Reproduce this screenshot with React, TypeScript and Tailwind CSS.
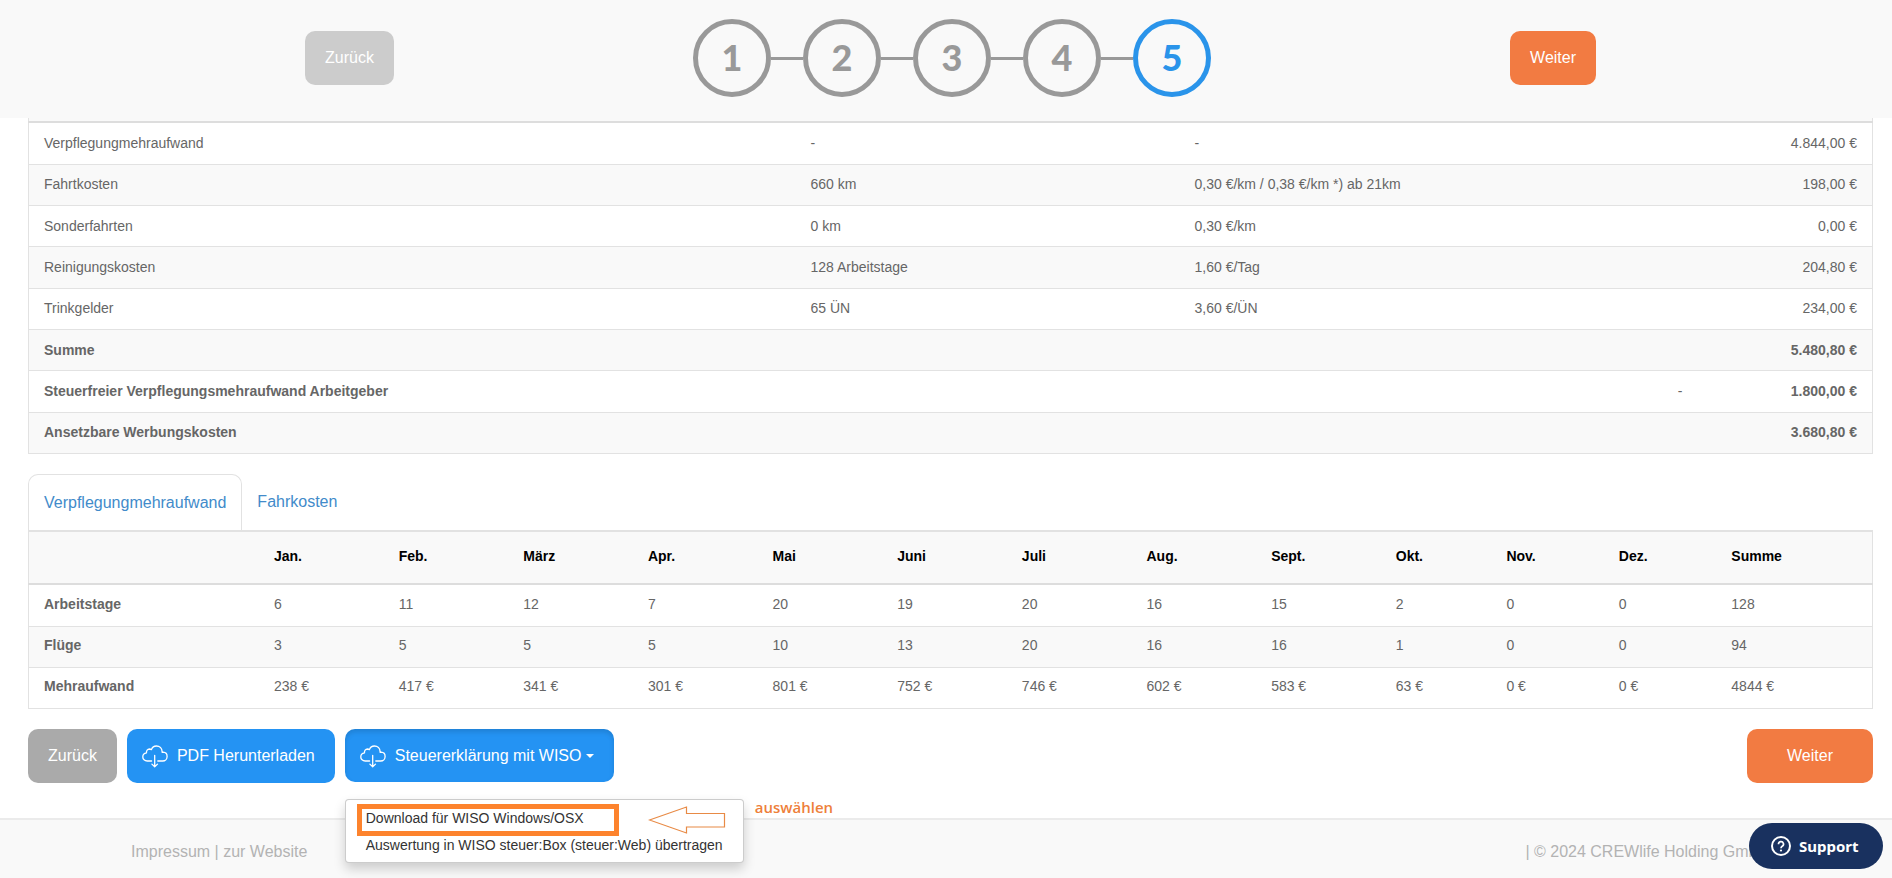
import React from "react";

const steps = ["1", "2", "3", "4", "5"];

const costs: string[][] = [
  ["Verpflegungmehraufwand", "-", "-", "4.844,00 €"],
  ["Fahrtkosten", "660 km", "0,30 €/km / 0,38 €/km *) ab 21km", "198,00 €"],
  ["Sonderfahrten", "0 km", "0,30 €/km", "0,00 €"],
  ["Reinigungskosten", "128 Arbeitstage", "1,60 €/Tag", "204,80 €"],
  ["Trinkgelder", "65 ÜN", "3,60 €/ÜN", "234,00 €"],
];

const totals: string[][] = [
  ["Summe", "", "5.480,80 €"],
  ["Steuerfreier Verpflegungsmehraufwand Arbeitgeber", "-", "1.800,00 €"],
  ["Ansetzbare Werbungskosten", "", "3.680,80 €"],
];

const months = ["Jan.", "Feb.", "März", "Apr.", "Mai", "Juni", "Juli", "Aug.", "Sept.", "Okt.", "Nov.", "Dez.", "Summe"];

const monthly: string[][] = [
  ["Arbeitstage", "6", "11", "12", "7", "20", "19", "20", "16", "15", "2", "0", "0", "128"],
  ["Flüge", "3", "5", "5", "5", "10", "13", "20", "16", "16", "1", "0", "0", "94"],
  ["Mehraufwand", "238 €", "417 €", "341 €", "301 €", "801 €", "752 €", "746 €", "602 €", "583 €", "63 €", "0 €", "0 €", "4844 €"],
];

function CloudDownload() {
  return (
    <svg width="26" height="26" viewBox="0 0 26 26" fill="none" stroke="currentColor" strokeWidth="1.3" strokeLinecap="round" strokeLinejoin="round" aria-hidden="true">
      <path d="M9.600 18H5.200C2.700 18 .8 16.300.8 13.900c0-2.200 1.600-3.700 3.700-4-.3-2.100 1-3.800 3-3.900.7 0 1.300.2 1.900.6C10.200 4.400 12.100 3 14.400 3c3.200 0 5.600 2.400 5.700 5.500v.8c.4-.1.7-.1 1-.1 2.300.1 4 2 4 4.300 0 2.500-1.900 4.500-4.400 4.500H15.800" />
      <path d="M12.700 12.300V23.600M9.900 21.100l2.800 2.700 2.800-2.700" />
    </svg>
  );
}

function Stepper() {
  return (
    <ol className="flex items-center">
      {steps.map((s, i) => (
        <li key={s} className="flex items-center">
          {i > 0 && <span className="h-[3px] w-8 bg-[#999]" />}
          <span
            className={
              i === 4
                ? "flex size-[78px] items-center justify-center rounded-full border-5 border-[#2a94ea] pb-[2px] font-['Lato',sans-serif] text-4xl font-black text-[#2a94ea]"
                : "flex size-[78px] items-center justify-center rounded-full border-5 border-[#999] pb-[2px] font-['Lato',sans-serif] text-4xl font-black text-[#999]"
            }
          >
            {s}
          </span>
        </li>
      ))}
    </ol>
  );
}

export default function App() {
  return (
    <div className="flex min-h-screen flex-col bg-white font-['Liberation_Sans',Arial,sans-serif] text-base text-[#666]">
      <header className="flex h-[118px] items-center justify-between bg-[#f9f9f9] pr-[296px] pb-[2px] pl-[305px]">
        <button className="h-[54px] rounded-[10px] bg-[#ccc] px-5 text-white">Zurück</button>
        <Stepper />
        <button className="h-[54px] rounded-[10px] bg-[#f27b42] px-5 text-white">Weiter</button>
      </header>

      <main className="pr-[19px] pb-[35px] pl-7">
        <div className="h-[3px] border-x border-[#e2e2e2] bg-[#f9f9f9]" />
        <table className="h-[333px] w-full table-fixed border-collapse border border-t-2 border-[#e2e2e2] border-t-[#ddd] text-sm">
          <colgroup>
            <col className="w-[767px]" />
            <col className="w-[384px]" />
            <col />
            <col className="w-[190px]" />
          </colgroup>
          <tbody>
            {costs.map((r) => (
              <tr key={r[0]} className="border-b border-[#e2e2e2] even:bg-[#f9f9f9]">
                <td className="px-[15px] pb-px">{r[0]}</td>
                <td className="px-[15px] pb-px">{r[1]}</td>
                <td className="px-[15px] pb-px">{r[2]}</td>
                <td className="px-[15px] pb-px text-right">{r[3]}</td>
              </tr>
            ))}
            {totals.map((r) => (
              <tr key={r[0]} className="border-b border-[#e2e2e2] even:bg-[#f9f9f9]">
                <th scope="row" colSpan={2} className="px-[15px] pb-px text-left font-bold">{r[0]}</th>
                <td className="pb-px text-right">{r[1]}</td>
                <td className="px-[15px] pb-px text-right font-bold">{r[2]}</td>
              </tr>
            ))}
          </tbody>
        </table>

        <nav className="mt-5 flex h-14 text-[#428bca]">
          <a href="#verpflegung" className="flex items-center rounded-t-[10px] border border-b-0 border-[#e2e2e2] px-[15px]">Verpflegungmehraufwand</a>
          <a href="#fahrkosten" className="flex items-center px-[15px]">Fahrkosten</a>
        </nav>

        <table className="h-[179px] w-full table-fixed border-collapse border border-t-2 border-[#e2e2e2] text-sm">
          <colgroup>
            <col className="w-[12.5%]" />
            {months.map((m, i) => (
              <col key={m} className={i < 9 ? "w-[6.76%]" : i === 9 ? "w-[6%]" : i < 12 ? "w-[6.1%]" : ""} />
            ))}
          </colgroup>
          <thead>
            <tr className="h-[53px] border-b-2 border-[#ddd] bg-[#f9f9f9] text-left text-black">
              <td />
              {months.map((m) => (
                <th key={m} scope="col" className="px-[15px] pb-1 font-bold">{m}</th>
              ))}
            </tr>
          </thead>
          <tbody>
            {monthly.map((r) => (
              <tr key={r[0]} className="border-b border-[#e2e2e2] even:bg-[#f9f9f9]">
                <th scope="row" className="px-[15px] pb-[3px] text-left font-bold">{r[0]}</th>
                {r.slice(1).map((v, i) => (
                  <td key={i} className="px-[15px] pb-[3px]">{v}</td>
                ))}
              </tr>
            ))}
          </tbody>
        </table>

        <div className="mt-5 flex h-[54px] items-start gap-[10px] text-white">
          <button className="h-[54px] rounded-[10px] bg-[#aaa] px-5">Zurück</button>
          <button className="flex h-[54px] items-center gap-[9px] rounded-[10px] bg-[#2493f3] pr-5 pl-[15px]">
            <CloudDownload />
            PDF Herunterladen
          </button>
          <div className="relative">
            <button aria-expanded="true" className="flex h-[53px] items-center gap-[9px] rounded-[10px] bg-[#2493f3] pr-5 pl-[15px] shadow-[inset_0_3px_5px_rgba(0,0,0,0.125)]">
              <CloudDownload />
              <span className="flex items-center gap-[5px]">
                Steuererklärung mit WISO
                <span className="border-x-4 border-t-4 border-x-transparent border-t-white" />
              </span>
            </button>
            <div className="absolute top-[70px] left-0 z-10 w-[399px] rounded border border-black/20 bg-white px-[11px] pt-1 pb-2 text-sm text-[#333] shadow-[0_6px_12px_rgba(0,0,0,0.18)]">
              <div className="flex items-center gap-[29px]">
                <a href="#wiso-download" className="block h-8 w-[262px] border-5 border-[#fd832d] pl-1 leading-[18px]">Download für WISO Windows/OSX</a>
                <svg width="78" height="28" viewBox="0 0 78 28" fill="none" stroke="#e88a45" strokeWidth="1.200" aria-hidden="true">
                  <path d="M1.500 14 38.500 1v6.500h38v13.500h-38V27Z" />
                </svg>
              </div>
              <a href="#wiso-box" className="block pl-[9px] leading-[18px]">Auswertung in WISO steuer:Box (steuer:Web) übertragen</a>
            </div>
            <span className="absolute top-[67px] left-[410px] font-['Open_Sans',sans-serif] text-[15px] leading-[22px] font-semibold text-[#ee7f3a]">auswählen</span>
          </div>
          <button className="ml-auto h-[54px] w-[126px] rounded-[10px] bg-[#f27b42]">Weiter</button>
        </div>
      </main>

      <footer className="flex flex-1 items-center justify-between border-t-2 border-[#ebebeb] bg-[#f9f9f9] pt-[6px] pr-[123px] pl-[131px] text-[#b3b3b3]">
        <div>
          <a href="#impressum">Impressum</a> | <a href="#website">zur Website</a>
        </div>
        <div>| © 2024 CREWlife Holding GmbH</div>
      </footer>

      <button className="fixed right-[9px] bottom-[9px] z-20 flex h-[46px] w-[134px] items-center gap-2 rounded-full bg-[#19315f] pl-[22px] font-['Noto_Sans',sans-serif] text-[15px] font-bold text-white">
        <svg width="20" height="20" viewBox="0 0 20 20" fill="none" stroke="currentColor" strokeWidth="2" aria-hidden="true">
          <circle cx="10" cy="10" r="9" />
          <path d="M7.500 8.200a2.500 2.500 0 1 1 3.700 2.100c-.8.500-1.200.9-1.200 1.900" strokeWidth="1.700" />
          <circle cx="10" cy="14.500" r="1.100" fill="currentColor" stroke="none" />
        </svg>
        Support
      </button>
    </div>
  );
}
